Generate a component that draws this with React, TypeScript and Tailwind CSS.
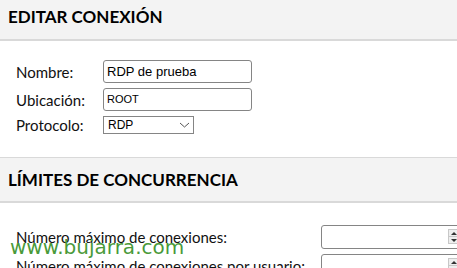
import React from 'react';

const Spinner: React.FC = () => (
  <div className="absolute right-[0px] top-[3px] w-[12px] h-[15px] flex flex-col border border-[#c8c8c8] bg-[#eeeeee]">
    <div className="flex-1 flex items-center justify-center border-b border-[#c8c8c8]">
      <div className="w-0 h-0 border-l-[3px] border-r-[3px] border-b-[3px] border-l-transparent border-r-transparent border-b-[#333]" />
    </div>
    <div className="flex-1 flex items-center justify-center">
      <div className="w-0 h-0 border-l-[3px] border-r-[3px] border-t-[3px] border-l-transparent border-r-transparent border-t-[#333]" />
    </div>
  </div>
);

const SectionHeader: React.FC<{ title: string; className?: string }> = ({ title, className }) => (
  <div className={`bg-[#f3f3f3] border-b-2 border-[#d9d9d9] flex items-center pl-2 ${className ?? ''}`}>
    <h2 className="text-[17px] font-bold text-black">{title}</h2>
  </div>
);

const App: React.FC = () => {
  return (
    <div className="w-[457px] h-[268px] overflow-hidden bg-white relative font-['Lato',sans-serif] text-[#111]">
      <SectionHeader title="EDITAR CONEXIÓN" className="h-[41px] pb-[5px]" />

      {/* Connection form */}
      <div className="pl-4 pt-[19px] flex flex-col gap-[5px]">
        <div className="flex items-center">
          <span className="w-[87px] shrink-0 text-[15px] leading-[18px]">Nombre:</span>
          <div className="w-[149px] h-[23px] border border-[#858585] rounded-[3px] flex items-center pl-[3px] font-['Liberation_Sans',sans-serif] text-[13px] text-black">
            RDP de prueba
          </div>
        </div>
        <div className="flex items-center">
          <span className="w-[87px] shrink-0 text-[15px] leading-[18px]">Ubicación:</span>
          <div className="w-[149px] h-[23px] border border-[#858585] rounded-[3px] flex items-center pl-[3px] font-['Liberation_Sans',sans-serif] text-[11px] text-black">
            ROOT
          </div>
        </div>
        <div className="flex items-center">
          <span className="w-[87px] shrink-0 text-[15px] leading-[18px]">Protocolo:</span>
          <div className="w-[91px] h-[18px] border border-[#858585] flex items-center justify-between pl-[4px] pr-[3px] font-['Liberation_Sans',sans-serif] text-[12px] text-black">
            <span>RDP</span>
            <svg width="11" height="6" viewBox="0 0 11 6" fill="none" stroke="#555" strokeWidth="1">
              <path d="M1 1l4.5 4 4.5-4" />
            </svg>
          </div>
        </div>
      </div>

      <SectionHeader title="LÍMITES DE CONCURRENCIA" className="mt-[23px] h-[46px] border-t border-t-[#d9d9d9]" />

      {/* Concurrency limits */}
      <div className="pl-4 pt-[22px] flex flex-col gap-[5px]">
        <div className="flex items-center">
          <span className="w-[305px] shrink-0 whitespace-nowrap text-[15px] leading-[18px]">Número máximo de conexiones:</span>
          <div className="relative shrink-0 w-[140px] h-[24px] border border-[#858585] rounded-[3px]">
            <Spinner />
          </div>
        </div>
        <div className="flex items-center">
          <span className="w-[305px] shrink-0 whitespace-nowrap text-[15px] leading-[18px]">Número máximo de conexiones por usuario:</span>
          <div className="relative shrink-0 w-[140px] h-[24px] border border-[#858585] rounded-[3px]">
            <Spinner />
          </div>
        </div>
      </div>

      {/* Watermark */}
      <div className="absolute left-[10px] top-[237px] font-['DejaVu_Sans',sans-serif] text-[20px] leading-none text-[#4a9a3a]">
        www.bujarra.com
      </div>
    </div>
  );
};

export default App;
